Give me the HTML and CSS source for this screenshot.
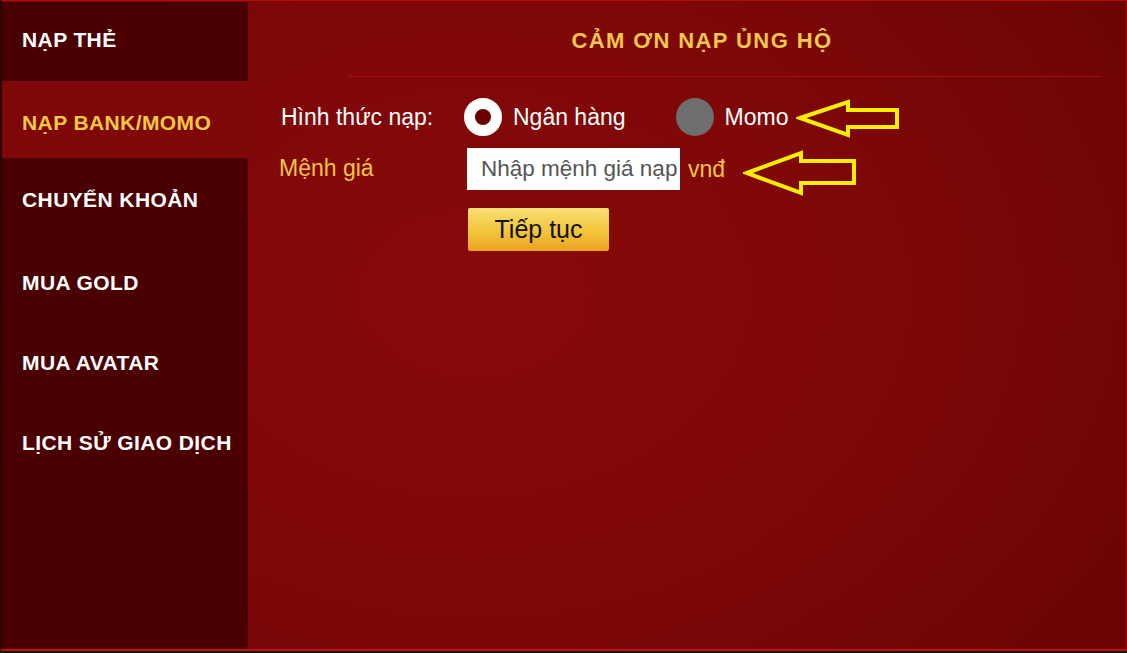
FILE: index.html
```html
<!DOCTYPE html>
<html>

<head>
  <meta charset="utf-8">
  <link rel="stylesheet" href="styles.css">
</head>

<body>
  <div class="frame">
    <div class="sidebar">
      <div class="menu-item">NẠP THẺ</div>
      <div class="menu-item active">NẠP BANK/MOMO</div>
      <div class="menu-item">CHUYỂN KHOẢN</div>
      <div class="menu-item">MUA GOLD</div>
      <div class="menu-item">MUA AVATAR</div>
      <div class="menu-item">LỊCH SỬ GIAO DỊCH</div>
    </div>

    <div class="content">
      <div class="header">CẢM ƠN NẠP ỦNG HỘ</div>

      <div class="form-row row-method">
        <span class="label">Hình thức nạp:</span>
        <span class="radio checked"></span>
        <span class="radio-text">Ngân hàng</span>
        <span class="radio grey"></span>
        <span class="radio-text">Momo</span>
        <svg class="arrow arrow-one" width="106" height="40" viewBox="0 0 106 40">
          <polygon points="4,20 52,4 52,12 101,12 101,29 52,29 52,37" fill="none" stroke="#ffee00" stroke-width="4" stroke-linejoin="miter"/>
        </svg>
      </div>

      <div class="form-row row-amount">
        <span class="label yellow">Mệnh giá</span>
        <input class="amount" type="text" placeholder="Nhập mệnh giá nạp">
        <span class="unit">vnđ</span>
        <svg class="arrow arrow-two" width="116" height="46" viewBox="0 0 116 46">
          <polygon points="4,23 58,3 58,11 111,11 111,33 58,33 58,43" fill="none" stroke="#ffee00" stroke-width="4" stroke-linejoin="miter"/>
        </svg>
      </div>

      <div class="form-row row-submit">
        <button class="btn-next">Tiếp tục</button>
      </div>
    </div>
  </div>
</body>

</html>
```

FILE: styles.css
```css
body {
  margin: 0;
  background-color: #1b1414;
  font-family: "Liberation Sans", Arial, sans-serif;
}

.frame {
  display: flex;
  width: 1124px;
  height: 648px;
  border-top: 1px solid #b30b0b;
  border-right: 1px solid #a00808;
  border-bottom: 2px solid #c20e0e;
  border-left: 2px solid #2a0505;
  background: radial-gradient(ellipse 70% 90% at 42% 45%, #880a0a 0%, #7d0707 55%, #6a0404 100%);
}

/* menu ben trai */
.sidebar {
  width: 246px;
  margin-top: 1px;
  background-color: #4a0000;
}

.menu-item {
  height: 77px;
  padding-bottom: 3px;
  display: flex;
  align-items: center;
  padding-left: 20px;
  color: #ffffff;
  font-size: 21px;
  font-weight: bold;
  letter-spacing: 0.4px;
}

.menu-item:first-child {
  height: 76px;
}

.menu-item.active {
  background-color: #7e0707;
  color: #f6c844;
  padding-top: 10px;
  height: 64px;
}

.menu-item:nth-child(3) {
  height: 83px;
}

/* noi dung */
.content {
  flex: 1;
  padding-left: 33px;
}

.header {
  height: 71px;
  padding-top: 4px;
  margin-left: 67px;
  margin-right: 26px;
  border-bottom: 1px solid #a80c0c;
  display: flex;
  align-items: center;
  justify-content: center;
  padding-right: 44px;
  color: #f4c84a;
  font-size: 22px;
  font-weight: bold;
  letter-spacing: 1.4px;
}

.form-row {
  display: flex;
  align-items: center;
}

.row-method {
  height: 42px;
  margin-top: 19px;
}

.label {
  width: 183px;
  color: #ffffff;
  font-size: 23px;
}

.label.yellow {
  width: 188px;
  margin-left: -2px;
  color: #f2c445;
  margin-top: -2px;
}

.radio {
  width: 38px;
  height: 38px;
  border-radius: 50%;
  box-sizing: border-box;
}

.radio.checked {
  background-color: #6a0000;
  border: 11px solid #ffffff;
}

.radio.grey {
  margin-left: 50px;
  background-color: #6e6e6e;
}

.radio-text {
  margin-left: 11px;
  color: #ffffff;
  font-size: 23px;
}

.arrow-one {
  margin-left: 8px;
  margin-top: 2px;
}

.row-amount {
  height: 42px;
  margin-top: 10px;
}

.amount {
  width: 213px;
  height: 42px;
  box-sizing: border-box;
  border: none;
  outline: none;
  padding: 0 0 0 14px;
  font-family: "Liberation Sans", Arial, sans-serif;
  font-size: 22.5px;
  background-color: #ffffff;
}

.amount::placeholder {
  color: #555555;
}

.unit {
  margin-left: 8px;
  color: #f2c445;
  font-size: 23px;
}

.arrow-two {
  margin-left: 18px;
  margin-top: 8px;
}

.row-submit {
  margin-top: 18px;
  padding-left: 187px;
}

.btn-next {
  width: 141px;
  height: 43px;
  border: none;
  border-radius: 2px;
  background: linear-gradient(#f9df75, #f2c53a 55%, #eca122);
  color: #111111;
  font-family: "Liberation Sans", Arial, sans-serif;
  font-size: 25px;
  cursor: pointer;
}
```
